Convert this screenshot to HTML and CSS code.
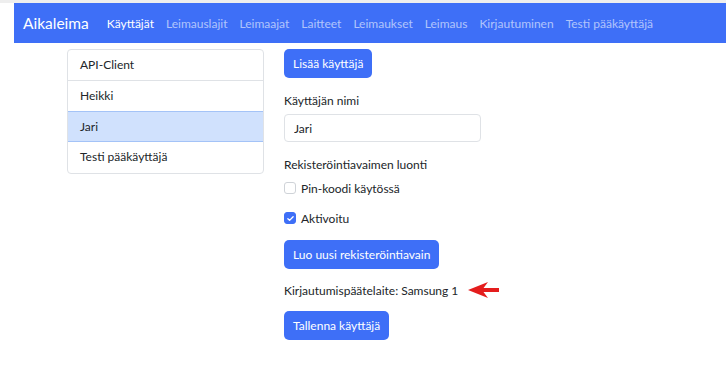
FILE: index.html
```html
<!DOCTYPE html>
<html lang="fi">
<head>
    <meta charset="UTF-8">
    <meta name="viewport" content="width=device-width, initial-scale=1.0">
    <title>Aikaleima - Käyttäjät</title>
    <link rel="stylesheet" href="styles.css">
</head>
<body>
    <div class="topline"></div>
    <nav class="navbar">
        <span class="brand">Aikaleima</span>
        <a class="nav-link active" href="#">Käyttäjät</a>
        <a class="nav-link" href="#">Leimauslajit</a>
        <a class="nav-link" href="#">Leimaajat</a>
        <a class="nav-link" href="#">Laitteet</a>
        <a class="nav-link" href="#">Leimaukset</a>
        <a class="nav-link" href="#">Leimaus</a>
        <a class="nav-link" href="#">Kirjautuminen</a>
        <a class="nav-link" href="#">Testi pääkäyttäjä</a>
    </nav>

    <main class="content">
        <ul class="list-group">
            <li class="list-item">API-Client</li>
            <li class="list-item">Heikki</li>
            <li class="list-item selected">Jari</li>
            <li class="list-item">Testi pääkäyttäjä</li>
        </ul>

        <div class="user-form">
            <button class="button">Lisää käyttäjä</button>

            <label class="field-label" for="userName">Käyttäjän nimi</label>
            <input id="userName" class="text-input" type="text" value="Jari">

            <div class="section-label">Rekisteröintiavaimen luonti</div>
            <label class="check">
                <span class="box"></span>
                Pin-koodi käytössä
            </label>
            <label class="check">
                <span class="box checked">
                    <svg viewBox="0 0 12 12" width="9" height="9"><path d="M2.5 6.2l2.3 2.3 4.7-4.8" fill="none" stroke="#fff" stroke-width="1.8" stroke-linecap="round" stroke-linejoin="round"/></svg>
                </span>
                Aktivoitu
            </label>

            <button class="button">Luo uusi rekisteröintiavain</button>

            <div class="device-row">
                <span>Kirjautumispäätelaite: Samsung 1</span>
                <svg class="arrow" viewBox="0 0 32 18" width="32" height="18">
                    <path d="M0 9 L20 1 L15.5 7 L31 7 L31 11 L15.5 11 L20 17 Z" fill="#e41d1d"/>
                </svg>
            </div>

            <button class="button">Tallenna käyttäjä</button>
        </div>
    </main>
</body>
</html>
```

FILE: styles.css
```css
* { margin: 0; padding: 0; box-sizing: border-box; }

body {
    font-family: "Segoe UI", Lato, "Liberation Sans", sans-serif;
    font-size: 12px;
    color: #212529;
    background: #ffffff;
}

.topline {
    height: 3px;
    background: #eeeeee;
}

.navbar {
    display: flex;
    align-items: center;
    height: 40px;
    margin-left: 14px;
    padding-left: 9px;
    background: #3e6ff7;
    white-space: nowrap;
}

.brand {
    color: #ffffff;
    font-size: 15.5px;
    margin-right: 12px;
}

.nav-link {
    color: rgba(255, 255, 255, 0.6);
    text-decoration: none;
    padding: 0 6px;
}

.nav-link.active {
    color: #ffffff;
}

.content {
    display: flex;
    gap: 20px;
    padding: 6px 0 0 67px;
}

.list-group {
    list-style: none;
    width: 197px;
    border: 1px solid #dfe2e6;
    border-radius: 4px;
    align-self: flex-start;
    overflow: hidden;
}

.list-item {
    height: 31px;
    line-height: 30px;
    padding: 0 12px;
    border-bottom: 1px solid #dfe2e6;
}

.list-item:last-child {
    border-bottom: none;
}

.list-item.selected {
    background: #d0e1fd;
    border-bottom-color: #a4c3f7;
    border-top: 1px solid #a4c3f7;
    margin-top: -1px;
}

.user-form {
    display: flex;
    flex-direction: column;
    align-items: flex-start;
}

.button {
    font-family: inherit;
    font-size: 12px;
    color: #ffffff;
    background: #3e6ff7;
    border: none;
    border-radius: 5px;
    height: 29px;
    padding: 0 9px;
    cursor: pointer;
}

.field-label {
    margin-top: 15px;
    margin-bottom: 6px;
}

.text-input {
    width: 197px;
    height: 28px;
    padding: 0 9px;
    font-family: inherit;
    font-size: 12px;
    color: #212529;
    border: 1px solid #dfe2e6;
    border-radius: 4px;
}

.section-label {
    margin-top: 15px;
}

.check {
    display: flex;
    align-items: center;
    gap: 5px;
    margin-top: 7px;
    height: 18px;
}

.check + .check {
    margin-top: 12px;
}

.box {
    display: flex;
    align-items: center;
    justify-content: center;
    width: 12px;
    height: 12px;
    border: 1px solid #cfd3d8;
    border-radius: 3px;
    background: #ffffff;
}

.box.checked {
    background: #3e6ff7;
    border-color: #3e6ff7;
}

.check + .button {
    margin-top: 13px;
}

.device-row {
    display: flex;
    align-items: center;
    gap: 10px;
    margin-top: 12px;
    margin-bottom: 12px;
}
```
